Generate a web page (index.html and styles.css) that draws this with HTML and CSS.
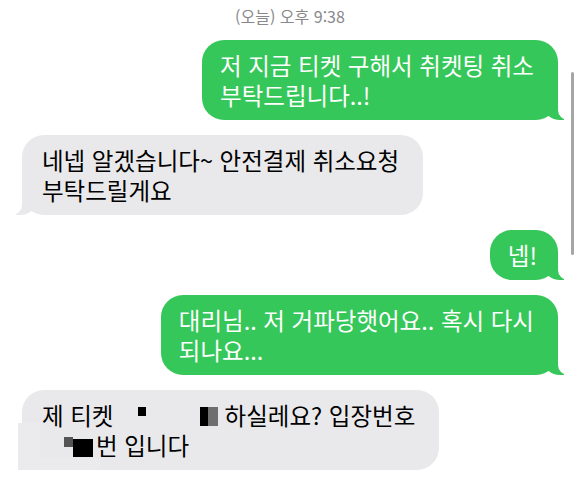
FILE: index.html
```html
<!DOCTYPE html>
<html lang="ko">
<head>
    <meta charset="UTF-8">
    <meta name="viewport" content="width=device-width, initial-scale=1.0">
    <title>메시지</title>
    <link rel="stylesheet" href="styles.css">
</head>
<body>
    <div class="thread">
        <div class="timestamp">(오늘) 오후 9:38</div>

        <div class="bubble sent">저 지금 티켓 구해서 취켓팅 취소<br>부탁드립니다..!</div>

        <div class="bubble received">네넵 알겠습니다~ 안전결제 취소요청<br>부탁드릴게요</div>

        <div class="bubble sent short">넵!</div>

        <div class="bubble sent">대리님.. 저 거파당햇어요.. 혹시 다시<br>되나요...</div>

        <!-- last message has parts blacked out -->
        <div class="bubble received last"><span class="patch side"></span><span class="patch foot"></span>제 티켓 <span class="redact dot"></span><span class="redact pair"><span class="blk"></span><span class="gry"></span></span> 하실레요? 입장번호<br><span class="redact num"><span class="gry small"></span><span class="blk big"></span></span>번 입니다</div>
    </div>

    <div class="scrollbar"></div>
</body>
</html>
```

FILE: styles.css
```css
/* Page */
body {
    margin: 0;
    background-color: #fff;
    font-family: "Noto Sans CJK KR", "Noto Sans", sans-serif;
    color: #000;
}

/* Message list */
.thread {
    display: flex;
    flex-direction: column;
    gap: 15px;
    padding: 6px 22px 0 22px;
}

.timestamp {
    text-align: center;
    font-size: 16px;
    line-height: 20px;
    color: #88888c;
    margin-bottom: -1px;
}

/* Bubbles */
.bubble {
    position: relative;
    font-size: 23.5px;
    line-height: 30px;
    padding: 10px 24px 10px 18px;
    border-radius: 22px;
    white-space: nowrap;
}

.sent {
    align-self: flex-end;
    background-color: #35c759;
    color: #fff;
}

.sent.short {
    padding-right: 21px;
}

.received {
    align-self: flex-start;
    background-color: #e9e9eb;
    padding: 10px 24px 10px 20px;
}

/* Tails */
.sent::before,
.received::before {
    content: "";
    position: absolute;
    bottom: 0;
    width: 20px;
    height: 22px;
}

.sent::after,
.received::after {
    content: "";
    position: absolute;
    bottom: 0;
    width: 26px;
    height: 22px;
    background-color: #fff;
}

.sent::before {
    right: -6px;
    background-color: #35c759;
    border-bottom-left-radius: 16px 14px;
}

.sent::after {
    right: -26px;
    border-bottom-left-radius: 10px;
}

.received::before {
    left: -6px;
    background-color: #e9e9eb;
    border-bottom-right-radius: 16px 14px;
}

.received::after {
    left: -26px;
    border-bottom-right-radius: 10px;
}

/* the edited last bubble has no tail */
.last::before,
.last::after {
    display: none;
}

/* Redacted bits */
.redact {
    position: relative;
    display: inline-block;
    vertical-align: top;
}

.dot {
    width: 8px;
    height: 9px;
    margin: 7px 54px 0 18px;
    background-color: #000;
}

.pair {
    display: inline-flex;
    margin-top: 7px;
}

.pair .blk {
    width: 8px;
    height: 19px;
    background-color: #000;
}

.pair .gry {
    width: 10px;
    height: 19px;
    background-color: #6e6e6e;
}

.num {
    display: inline-flex;
    align-items: flex-start;
    margin: 7px 3px 0 22px;
}

.num .small {
    width: 9px;
    height: 10px;
    background-color: #555;
}

.num .big {
    width: 20px;
    height: 18px;
    margin-top: 2px;
    background-color: #000;
}

/* leftover patches from the edit */
.patch {
    position: absolute;
    background-color: #ebebed;
}

.patch.side {
    left: -4px;
    top: 33px;
    width: 22px;
    height: 47px;
}

.patch.foot {
    left: 0;
    bottom: -5px;
    width: 78px;
    height: 17px;
}

/* iOS style scroll indicator */
.scrollbar {
    position: absolute;
    top: 72px;
    left: 571px;
    width: 3px;
    height: 183px;
    border-radius: 2px;
    background-color: #a6a6a6;
}
```
